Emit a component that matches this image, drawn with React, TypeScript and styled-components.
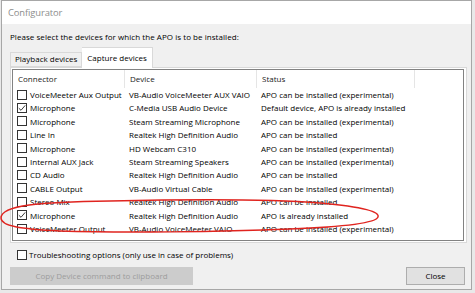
import React from "react";
import styled, { createGlobalStyle } from "styled-components";

const Global = createGlobalStyle`
  html, body { margin: 0; padding: 0; background: #e9e9e9; }
  body { font-family: "Open Sans", "Noto Sans", sans-serif; font-size: 8px; color: #000; }
  * { box-sizing: border-box; }
`;

const Window = styled.div`
  position: relative;
  margin-left: 1px;
  width: 471px;
  height: 290px;
  border: 1px solid #a7a7a7;
  background: #f0f0f0;
  display: flex;
  flex-direction: column;
`;

const TitleBar = styled.div`
  height: 23px;
  flex: none;
  background: #fff;
  color: #8d8d8d;
  font-size: 9.4px;
  line-height: 23px;
  padding-left: 6px;
  letter-spacing: -0.1px;
`;

const Body = styled.div`
  flex: 1;
  display: flex;
  flex-direction: column;
  padding: 0 5px 0 8px;
`;

const Prompt = styled.div`
  margin-top: 7px;
  line-height: 12px;
  letter-spacing: 0.05px;
`;

const Tabs = styled.div`
  display: flex;
  align-items: flex-end;
  height: 20px;
  margin-top: 4px;
  position: relative;
  z-index: 1;
`;

const Tab = styled.div<{ $active?: boolean }>`
  height: ${(p) => (p.$active ? 21 : 15)}px;
  margin-bottom: ${(p) => (p.$active ? -1 : 0)}px;
  border: 1px solid #d9d9d9;
  border-bottom: ${(p) => (p.$active ? "none" : "1px solid #d9d9d9")};
  border-left: ${(p) => (p.$active ? "none" : "1px solid #d9d9d9")};
  background: ${(p) => (p.$active ? "#fff" : "#f0f0f0")};
  padding: 0 ${(p) => (p.$active ? 5 : 4)}px;
  line-height: ${(p) => (p.$active ? 19 : 12)}px;
  white-space: nowrap;
`;

const Panel = styled.div`
  width: 457px;
  height: 176px;
  border: 1px solid #d9d9d9;
  background: #fff;
  padding: 1px 2px 1px 1px;
`;

const ListBox = styled.div`
  height: 172px;
  border: 1px solid #828282;
  background: #fff;
  overflow: hidden;
`;

const Grid = styled.div`
  display: grid;
  grid-template-columns: 112px 132px 158px 1fr;
`;

const HeaderCell = styled.div<{ $last?: boolean }>`
  height: 18px;
  line-height: 18px;
  padding-left: 5px;
  border-right: ${(p) => (p.$last ? "none" : "1px solid #e5e5e5")};
  white-space: nowrap;
  color: #1a1a1a;
`;

const Cell = styled.div`
  height: 13.4px;
  line-height: 13.4px;
  padding-left: 4px;
  display: flex;
  align-items: center;
  gap: 3px;
  white-space: nowrap;
  overflow: hidden;
`;

const Box = styled.span`
  width: 10px;
  height: 10px;
  flex: none;
  border: 1px solid #333;
  background: #fff;
  display: inline-flex;
  align-items: center;
  justify-content: center;
`;

const Check = ({ checked }: { checked?: boolean }) => (
  <Box>
    {checked && (
      <svg width="8" height="8" viewBox="0 0 8 8">
        <path d="M0.8 4.2 L3 6.3 L7.2 1.4" fill="none" stroke="#222" strokeWidth="0.9" />
      </svg>
    )}
  </Box>
);

const Annotation = styled.svg`
  position: absolute;
  left: -2px;
  top: -1px;
  pointer-events: none;
  overflow: visible;
`;

const OptionRow = styled.div`
  display: flex;
  align-items: center;
  gap: 2px;
  margin-top: 6px;
  padding-left: 7px;
  height: 11px;
  white-space: nowrap;
`;

const ButtonRow = styled.div`
  display: flex;
  justify-content: space-between;
  margin-top: 7px;
  padding-right: 1px;
`;

const Button = styled.div<{ $disabled?: boolean; $w: number }>`
  width: ${(p) => p.$w}px;
  height: 18px;
  line-height: 16px;
  text-align: center;
  border: 1px solid ${(p) => (p.$disabled ? "#cccccc" : "#adadad")};
  background: ${(p) => (p.$disabled ? "#cccccc" : "#e1e1e1")};
  color: ${(p) => (p.$disabled ? "#9c9c9c" : "#000")};
`;

const rows: [boolean, string, string, string][] = [
  [false, "VoiceMeeter Aux Output", "VB-Audio VoiceMeeter AUX VAIO", "APO can be installed (experimental)"],
  [true, "Microphone", "C-Media USB Audio Device", "Default device, APO is already installed"],
  [false, "Microphone", "Steam Streaming Microphone", "APO can be installed (experimental)"],
  [false, "Line In", "Realtek High Definition Audio", "APO can be installed"],
  [false, "Microphone", "HD Webcam C310", "APO can be installed (experimental)"],
  [false, "Internal AUX Jack", "Steam Streaming Speakers", "APO can be installed (experimental)"],
  [false, "CD Audio", "Realtek High Definition Audio", "APO can be installed"],
  [false, "CABLE Output", "VB-Audio Virtual Cable", "APO can be installed (experimental)"],
  [false, "Stereo Mix", "Realtek High Definition Audio", "APO can be installed"],
  [true, "Microphone", "Realtek High Definition Audio", "APO is already installed"],
  [false, "VoiceMeeter Output", "VB-Audio VoiceMeeter VAIO", "APO can be installed (experimental)"],
];

export default function App() {
  return (
    <>
      <Global />
      <Window>
        <TitleBar>Configurator</TitleBar>
        <Body>
          <Prompt>Please select the devices for which the APO is to be installed:</Prompt>
          <Tabs>
            <Tab>Playback devices</Tab>
            <Tab $active>Capture devices</Tab>
          </Tabs>
          <Panel>
            <ListBox>
              <Grid>
                <HeaderCell>Connector</HeaderCell>
                <HeaderCell>Device</HeaderCell>
                <HeaderCell>Status</HeaderCell>
                <HeaderCell $last />
                {rows.map(([c, con, dev, st], i) => (
                  <React.Fragment key={i}>
                    <Cell>
                      <Check checked={c} />
                      {con}
                    </Cell>
                    <Cell>{dev}</Cell>
                    <Cell>{st}</Cell>
                    <Cell />
                  </React.Fragment>
                ))}
              </Grid>
            </ListBox>
          </Panel>
          <OptionRow>
            <Check />
            Troubleshooting options (only use in case of problems)
          </OptionRow>
          <ButtonRow>
            <Button $disabled $w={183}>Copy Device command to clipboard</Button>
            <Button $w={59}>Close</Button>
          </ButtonRow>
        </Body>
        <Annotation width="475" height="293" viewBox="0 0 475 293">
          <path
            d="M1 218 C1 205, 40 202, 110 201 C200 199, 270 199, 320 203 C365 207, 380 212, 378 217 C376 223, 340 227, 290 229 C220 232, 120 233, 60 231 C20 229, 1 226, 1 218 Z"
            fill="none"
            stroke="#e0241f"
            strokeWidth="1.4"
          />
        </Annotation>
      </Window>
    </>
  );
}
